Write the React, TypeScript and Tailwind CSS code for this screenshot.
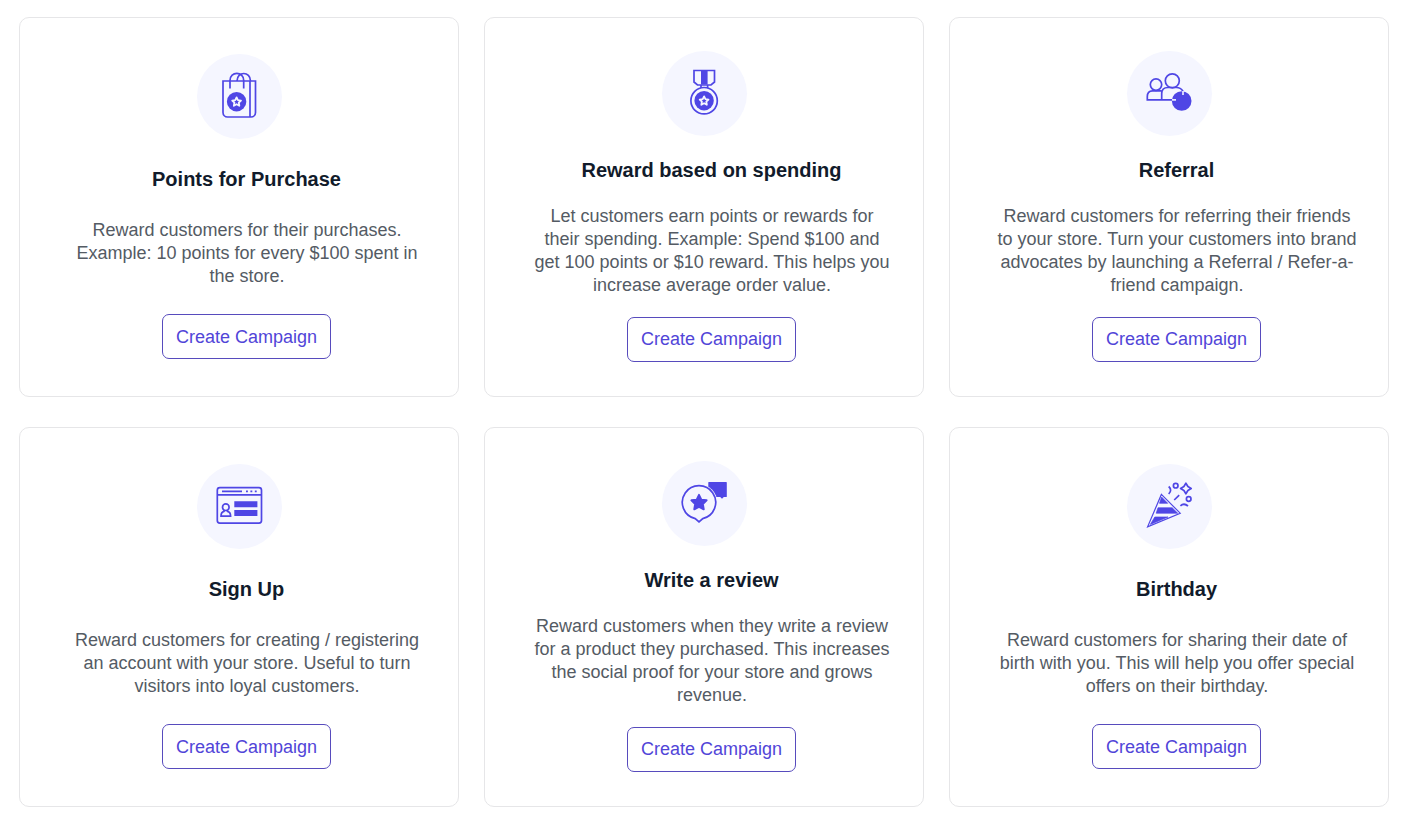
import type { ReactNode } from "react";

type TCampaign = {
    title: string,
    description: string,
    icon: ReactNode,
}

const STAR = "M0 -1 L0.29 -0.4 L0.95 -0.31 L0.48 0.15 L0.59 0.81 L0 0.5 L-0.59 0.81 L-0.48 0.15 L-0.95 -0.31 L-0.29 -0.4 Z";

const campaigns: TCampaign[] = [
    {
        title: "Points for Purchase",
        description: "Reward customers for their purchases. Example: 10 points for every $100 spent in the store.",
        icon: <BagIcon />,
    },
    {
        title: "Reward based on spending",
        description: "Let customers earn points or rewards for their spending. Example: Spend $100 and get 100 points or $10 reward. This helps you increase average order value.",
        icon: <MedalIcon />,
    },
    {
        title: "Referral",
        description: "Reward customers for referring their friends to your store. Turn your customers into brand advocates by launching a Referral / Refer-a-friend campaign.",
        icon: <ReferralIcon />,
    },
    {
        title: "Sign Up",
        description: "Reward customers for creating / registering an account with your store. Useful to turn visitors into loyal customers.",
        icon: <SignUpIcon />,
    },
    {
        title: "Write a review",
        description: "Reward customers when they write a review for a product they purchased. This increases the social proof for your store and grows revenue.",
        icon: <ReviewIcon />,
    },
    {
        title: "Birthday",
        description: "Reward customers for sharing their date of birth with you. This will help you offer special offers on their birthday.",
        icon: <BirthdayIcon />,
    },
];

export default function App() {
    return (
        <main className="grid grid-cols-3 gap-x-[25px] gap-y-[30px] bg-white pt-[17px] pr-[21px] pb-4 pl-[19px] font-['Liberation_Sans',Arial,sans-serif]">
            { campaigns.map((campaign) => (
                <CampaignCard key={campaign.title} {...campaign} />
            )) }
        </main>
    )
}

function CampaignCard({ title, description, icon }: TCampaign) {
    return (
        <section className="flex min-h-[380px] flex-col items-center justify-around rounded-[10px] border border-[#e6e6e8] pt-[23px] pb-6 text-center">
            <div className="size-[85px] rounded-full bg-[#f5f6ff]">
                {icon}
            </div>
            <h2 className="pl-[15px] text-xl leading-7 font-bold text-[#111b2b]">{title}</h2>
            <p className="pr-[30px] pl-[46px] text-lg leading-[23px] text-[#545b64]">{description}</p>
            <div className="pl-[15px]">
                <button
                    type="button"
                    className="h-[45px] cursor-pointer rounded-[7px] border border-[#574bbd] px-[13px] text-lg text-[#5145d8]"
                >
                    Create Campaign
                </button>
            </div>
        </section>
    )
}

function Icon({ children }: { children: ReactNode }) {
    return (
        <svg viewBox="0 0 85 85" className="size-full" fill="none" stroke="#4f46e5" strokeWidth="1.7" aria-hidden="true">
            {children}
        </svg>
    )
}

function BagIcon() {
    return (
        <Icon>
            <path d="M26 27 H58.5 V58.5 A4.5 4.5 0 0 1 54 63 H30.5 A4.5 4.5 0 0 1 26 58.5 Z" />
            <path d="M53 27 V63" />
            <path d="M33 34.5 V26.5 C33 17 46.7 17 46.7 26.5 V34.5" />
            <path d="M40 27 C40 17 53.5 17 53.5 27" />
            <circle cx="39.6" cy="47.7" r="9.7" fill="#4f46e5" stroke="none" />
            <path d={STAR} transform="translate(39.6 48) scale(4.6)" stroke="#f5f6ff" strokeWidth="0.4" strokeLinejoin="round" />
        </Icon>
    )
}

function MedalIcon() {
    return (
        <Icon>
            <path d="M32 19.5 H52.5 V31 L49 34 H35.5 L32 31 Z" />
            <rect x="39" y="19.5" width="6.6" height="14" fill="#4f46e5" stroke="none" />
            <path d="M39 34 V37 M45.6 34 V37" />
            <circle cx="42.1" cy="49.7" r="13.2" />
            <circle cx="42.1" cy="49.7" r="9.7" fill="#4f46e5" stroke="none" />
            <path d={STAR} transform="translate(42.1 50) scale(4.6)" stroke="#f5f6ff" strokeWidth="0.4" strokeLinejoin="round" />
        </Icon>
    )
}

function ReferralIcon() {
    return (
        <Icon>
            <circle cx="29" cy="33.6" r="5.7" />
            <circle cx="45.3" cy="29.8" r="7" />
            <path d="M34.7 39.8 H25.5 Q20.3 40 20.3 45.5 V48.8 H48" />
            <path d="M34.7 48.8 V42.5 Q34.7 36.5 41 36.5 H49.5 Q53.5 36.5 56 40.2" />
            <circle cx="54.7" cy="50" r="9.8" fill="#4f46e5" stroke="none" />
            <path d="M56 40 V44 M45 48.8 H49" stroke="#e9eaff" />
        </Icon>
    )
}

function SignUpIcon() {
    return (
        <Icon>
            <rect x="20.3" y="23.7" width="44.2" height="35.4" rx="2.5" />
            <path d="M20.3 30.8 H64.5 M25 27.4 H45" />
            <path d="M49 27.4 H50.9 M53.4 27.4 H55.3 M57.8 27.4 H59.7" />
            <path d="M37.3 37.3 H60.4 V43.3 H37.3 Z M37.3 46.1 H60.4 V52.1 H37.3 Z" fill="#4f46e5" stroke="none" />
            <circle cx="28.8" cy="43.2" r="3.3" />
            <path d="M27.2 46 L27 47.3 Q24 48 24 52.2 H33.6 Q33.6 48 30.5 47.3 L30.3 46" />
        </Icon>
    )
}

function ReviewIcon() {
    return (
        <Icon>
            <path d="M46.3 21.5 Q46.3 21 46.8 21 H64.2 Q64.8 21 64.8 21.5 V35.5 Q64.8 36 64.2 36 H61.8 L60 37.8 L58.2 36 H46.3 Z" fill="#4f46e5" stroke="none" />
            <circle cx="37" cy="41.4" r="18.3" fill="#f5f6ff" stroke="none" />
            <path d="M33.4 57.7 A16.7 16.7 0 1 1 40.6 57.7 L37 60.8 Z" stroke="none" fill="#f5f6ff" />
            <path d="M33.2 57.6 A16.7 16.7 0 1 1 40.8 57.6 L37 60.8 Z" />
            <path d={STAR} transform="translate(37 41.8) scale(8)" fill="#4f46e5" strokeWidth="0.24" strokeLinejoin="round" />
        </Icon>
    )
}

function BirthdayIcon() {
    return (
        <Icon>
            <path d="M34.4 30.4 L53.2 49.2 L20.6 62.8 Z" strokeWidth="1.2" />
            <path d="M34.6 33 L40.7 39.3 H32.5 Z M31 43.8 H45.2 L50.7 49.2 H29.2 Z M27.8 53 H41 L23.3 60.4 Z" fill="#4f46e5" strokeWidth="0.7" />
            <path d="M41.7 22.5 Q45.5 26 41.7 30" />
            <circle cx="48.7" cy="21.7" r="2.3" />
            <path d="M58.9 19.2 L60.9 22.5 L64.2 24.5 L60.9 26.5 L58.9 29.8 L56.9 26.5 L53.6 24.5 L56.9 22.5 Z" strokeLinejoin="round" />
            <path d="M47.2 36 L52.2 31.2" />
            <circle cx="61.7" cy="35" r="2.3" />
            <path d="M53.4 41.8 Q57 38.6 61 42" />
        </Icon>
    )
}
